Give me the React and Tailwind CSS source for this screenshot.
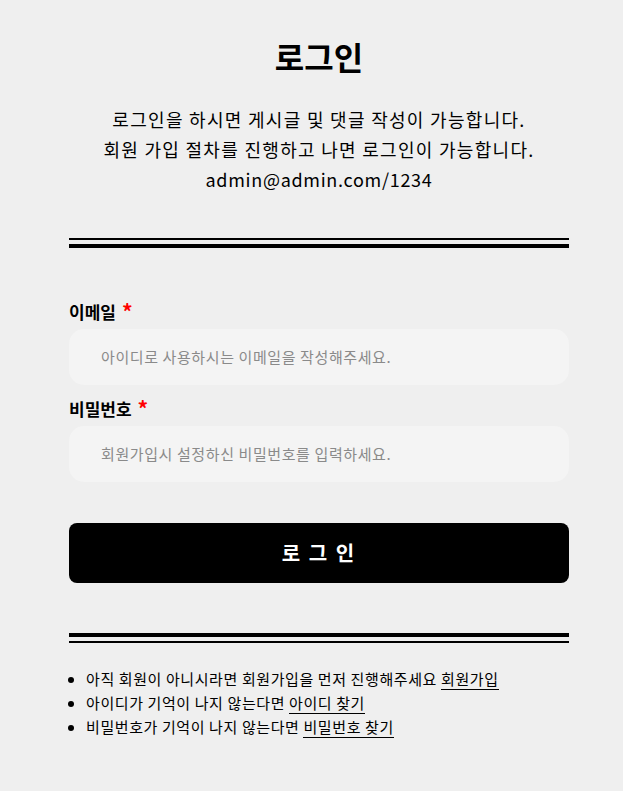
export default function App() {
  const font = { fontFamily: '"Noto Sans CJK KR", "Noto Sans", sans-serif' };
  return (
    <div className="min-h-screen bg-[#efefef] text-black" style={font}>
      <div className="ml-[69px] w-[500px] pt-[36px] pb-[40px]">
        <h1 className="text-center text-[32px] font-bold leading-[40px]">로그인</h1>
        <div className="mt-[28px] text-center text-[18px] leading-[30px] tracking-[1.3px]">
          <p>로그인을 하시면 게시글 및 댓글 작성이 가능합니다.</p>
          <p>회원 가입 절차를 진행하고 나면 로그인이 가능합니다.</p>
          <p className="tracking-[0.7px]">admin@admin.com/1234</p>
        </div>
        <div className="mt-[44px] flex flex-col gap-[4px]">
          <div className="h-[2px] bg-black" />
          <div className="h-[4px] bg-black" />
        </div>
        <div className="mt-[52px]">
          <label className="flex items-start text-[17px] font-bold leading-[24px]">
            이메일<span className="ml-[6px] mt-[-1px] text-[21px] leading-[24px] text-[#ff0000]">*</span>
          </label>
          <div className="mt-[5px] flex h-[56px] items-center rounded-[15px] bg-[#f4f4f4] pl-[32px] text-[15px] tracking-[0.6px] text-[#8a8a8a]">
            아이디로 사용하시는 이메일을 작성해주세요.
          </div>
          <label className="mt-[12px] flex items-start text-[17px] font-bold leading-[24px]">
            비밀번호<span className="ml-[6px] mt-[-1px] text-[21px] leading-[24px] text-[#ff0000]">*</span>
          </label>
          <div className="mt-[5px] flex h-[56px] items-center rounded-[15px] bg-[#f4f4f4] pl-[32px] text-[15px] tracking-[0.6px] text-[#8a8a8a]">
            회원가입시 설정하신 비밀번호를 입력하세요.
          </div>
        </div>
        <button className="mt-[41px] flex h-[60px] w-full items-center justify-center rounded-[8px] bg-black text-[20px] font-bold tracking-[2px] text-white">
          로 그 인
        </button>
        <div className="mt-[50px] flex flex-col gap-[4px]">
          <div className="h-[4px] bg-black" />
          <div className="h-[2px] bg-black" />
        </div>
        <ul className="mt-[24px] list-disc pl-[17px] text-[15px] leading-[24px] tracking-[0.6px]">
          <li>
            아직 회원이 아니시라면 회원가입을 먼저 진행해주세요{' '}
            <a className="border-b border-black">회원가입</a>
          </li>
          <li>
            아이디가 기억이 나지 않는다면 <a className="border-b border-black">아이디 찾기</a>
          </li>
          <li>
            비밀번호가 기억이 나지 않는다면 <a className="border-b border-black">비밀번호 찾기</a>
          </li>
        </ul>
      </div>
    </div>
  );
}
